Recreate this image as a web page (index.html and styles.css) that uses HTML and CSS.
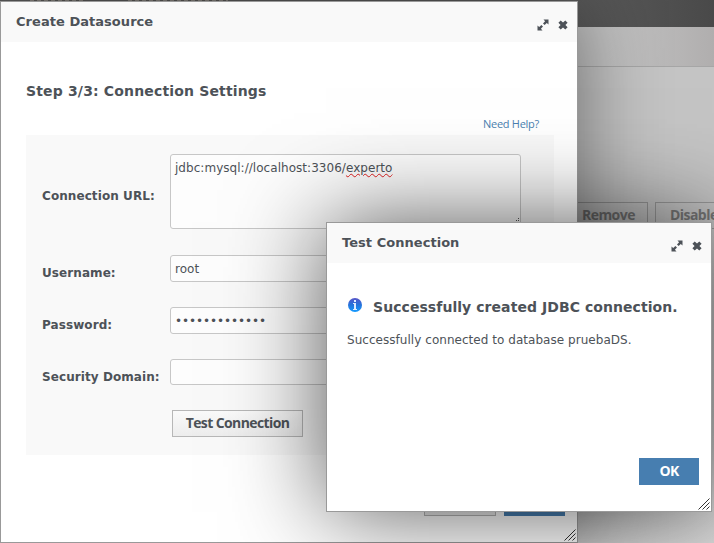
FILE: index.html
```html
<!DOCTYPE html>
<html lang="en">
<head>
<meta charset="utf-8">
<title>Create Datasource</title>
<link rel="stylesheet" href="styles.css">
</head>
<body>
<svg class="defs" width="0" height="0" aria-hidden="true">
  <symbol id="expand" viewBox="0 0 12 12"><path d="M6.500.5H11.500v5L9.800 3.900 7.600 6 6 4.400 8.100 2.200zM5.500 11.500H.5V6.500L2.200 8.100 4.400 6 6 7.600 3.900 9.800z"/></symbol>
  <symbol id="close" viewBox="0 0 10 10"><path d="M2.700.4 5 2.500 7.300.4 9.600 2.700 7.400 5 9.600 7.300 7.300 9.600 5 7.500 2.700 9.600.4 7.300 2.600 5 .4 2.700z"/></symbol>
  <symbol id="grip" viewBox="0 0 12 12"><path d="M.5 11.500l11-11M4.500 11.500l7-7M8.500 11.500l3-3"/></symbol>
</svg>
<div class="page">
  <div class="masthead"><i></i><i></i></div>
  <div class="tabs"></div>
  <div class="tools"><span>Remove</span><span>Disable</span></div>
</div>

<section class="window create">
  <header class="caption"><h1>Create Datasource</h1>
    <div class="controls"><svg class="expand"><use href="#expand"/></svg><svg class="close"><use href="#close"/></svg></div>
  </header>
  <div class="content">
    <h2>Step 3/3: Connection Settings</h2>
    <a class="help">Need Help?</a>
    <div class="form">
      <div class="row tall"><label>Connection URL:</label><div class="field area">jdbc:mysql://localhost:3306/<span class="typo">experto</span><svg class="dots" viewBox="0 0 5 5"><path d="M4 0h1v1H4zM2 2h1v1H2zM4 2h1v1H4zM0 4h1v1H0zM2 4h1v1H2zM4 4h1v1H4z"/></svg></div></div>
      <div class="row"><label>Username:</label><div class="field">root</div></div>
      <div class="row"><label>Password:</label><div class="field secret">•••••••••••••</div></div>
      <div class="row"><label>Security Domain:</label><div class="field short"></div></div>
      <button class="button test">Test Connection</button>
    </div>
  </div>
  <footer class="actions"><span class="button cancel"></span><span class="button primary done"></span></footer>
  <svg class="grip"><use href="#grip"/></svg>
</section>

<section class="window result">
  <header class="caption"><h1>Test Connection</h1>
    <div class="controls"><svg class="expand"><use href="#expand"/></svg><svg class="close"><use href="#close"/></svg></div>
  </header>
  <div class="message">
    <h2><svg class="info" viewBox="0 0 14 14"><defs><linearGradient id="blue" x2="0" y2="1"><stop stop-color="#5855c8"/><stop offset=".5" stop-color="#2474dc"/><stop offset="1" stop-color="#149bff"/></linearGradient></defs><circle cx="7" cy="7" r="7" fill="url(#blue)"/><path d="M6 2h2v2H6zM5 5h3v6h1v1H5v-1h1V6H5z" fill="#dfecff"/></svg>Successfully created JDBC connection.</h2>
    <p>Successfully connected to database pruebaDS.</p>
  </div>
  <footer class="confirm"><button class="button primary ok">OK</button></footer>
  <svg class="grip"><use href="#grip"/></svg>
</section>
</body>
</html>
```
FILE: styles.css
```css
* { box-sizing: border-box; }
body { margin: 0; width: 714px; height: 543px; overflow: hidden; position: relative; color: #4d5258; font: 12px "DejaVu Sans", sans-serif; letter-spacing: .04px; }
h1, h2, p { margin: 0; }
.defs { position: absolute; }
.page { height: 543px; background: linear-gradient(180deg, #c4c4c4 40%, #dcdcdc); }
.masthead { display: flex; gap: 42px; height: 27px; padding-left: 30px; background: linear-gradient(90deg, #5c5c5c 80%, #494949); }
.masthead i { width: 56px; height: 1px; background: repeating-linear-gradient(90deg, #8a8681 0 4px, #5c5b5a 4px 7px); }
.masthead i + i { width: 100px; }
.tabs { height: 40px; border-bottom: 1px solid #a6a6a6; background: linear-gradient(90deg, #c4c4c4 85%, #b0aeae); }
.tools { display: flex; gap: 7px; padding: 135px 0 0 567px; font: bold 14px "Open Sans", sans-serif; letter-spacing: -.55px; color: #777; }
.tools span { flex: none; width: 81px; height: 27px; border: 1px solid #999; padding: 2px 14px; }
.window { position: absolute; display: flex; flex-direction: column; border: 1px solid #999; background: #fff; }
.create { left: 0; top: 1px; width: 578px; height: 542px; box-shadow: 0 0 80px rgba(0,0,0,.48); }
.result { left: 326px; top: 222px; width: 386px; height: 290px; box-shadow: 0 0 90px rgba(0,0,0,.66); }
.caption { flex: none; height: 40px; display: flex; justify-content: space-between; background: #f9f9f9; padding: 12px 9px 0 15px; }
.caption h1 { font-size: 13px; line-height: 16px; letter-spacing: .04px; }
.controls { display: flex; gap: 9px; padding-top: 5px; fill: #4d5258; }
.expand { width: 12px; height: 12px; }
.close { width: 10px; height: 10px; margin-top: 1px; }
.grip { position: absolute; right: 1px; bottom: 1px; width: 12px; height: 12px; stroke: #333; stroke-width: 1; }
.content { padding: 40px 23px 0 25px; display: flex; flex-direction: column; }
h2 { font-size: 14px; line-height: 18px; }
.content h2 { letter-spacing: .16px; }
.help { align-self: flex-end; margin: 17px 15px 4px 0; color: #4a7fb0; font: 11px/14px "Open Sans", sans-serif; letter-spacing: -.28px; }
.form { height: 320px; padding: 19px 16px 0; background: #f9f9f9; }
.row { display: flex; height: 52px; }
.tall { height: 101px; }
.row label { width: 128px; padding-top: 10px; font-weight: bold; line-height: 16px; letter-spacing: .08px; }
.tall label { padding-top: 34px; }
.field { position: relative; width: 351px; height: 27px; border: 1px solid #c7c7c7; border-radius: 3px; padding: 5px 4px; background: #fdfdfd; line-height: 16px; }
.area { height: 75px; }
.short { height: 26px; }
.secret { padding-left: 4px; letter-spacing: -.08px; }
.typo { text-decoration: underline wavy #e02020 1px; }
.dots { position: absolute; right: 1px; bottom: 5px; width: 5px; height: 5px; fill: #555; }
.button { border: 1px solid #b7b7b7; padding: 0 0 2px; height: 27px; background: linear-gradient(#fafafa, #ededed); color: #4d5258; font: bold 14px/23px "Open Sans", sans-serif; letter-spacing: -.6px; }
.test { display: block; margin: -1px 0 0 130px; width: 131px; }
.primary { border-color: #477eb0; background: #477eb0; color: #fff; }
.actions { display: flex; gap: 8px; justify-content: flex-end; margin-top: 34px; padding-right: 12px; }
.cancel { width: 72px; }
.done { width: 61px; }
.message { flex: 1; padding: 35px 20px 0; }
.message h2 { display: flex; font-size: 14px; letter-spacing: .06px; }
.info { width: 14px; height: 14px; margin: 0 11px 0 1px; }
.message p { margin-top: 16px; line-height: 16px; }
.confirm { display: flex; justify-content: flex-end; padding: 0 12px 26px 0; }
.ok { width: 60px; }
```
